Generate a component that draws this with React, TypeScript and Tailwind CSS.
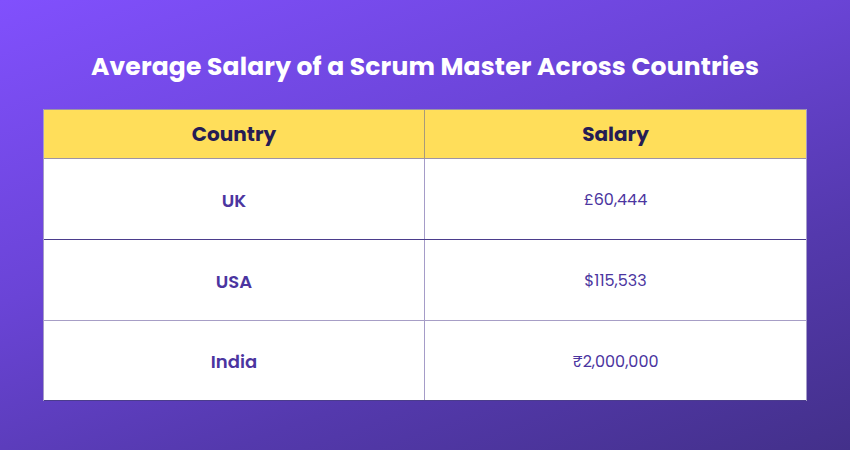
import React from "react";

const rows = [
  { c: "UK", s: "£60,444", cls: "h-[81px] border-[#4b3d8c]" },
  { c: "USA", s: "$115,533", cls: "h-[81px] border-[#a79ec6]" },
  { c: "India", s: "₹2,000,000", cls: "h-[80px] border-[#4b3d8c]" },
];

export default function App() {
  return (
    <div
      className="w-[850px] h-[450px] bg-[linear-gradient(160deg,#8150fd_0%,#6a44d6_40%,#5439ad_70%,#43308a_100%)] flex flex-col overflow-hidden"
      style={{ fontFamily: "Poppins, 'Open Sans', 'Noto Sans', sans-serif" }}
    >
      <h1 className="mt-[49px] h-[36px] flex items-center justify-center text-white text-[25px] font-bold tracking-[0.15px]">
        Average Salary of a Scrum Master Across Countries
      </h1>
      <div className="ml-[43px] mt-[24px] w-[764px] border-l border-r border-[#a59cc8]">
        <div className="grid grid-cols-2 h-[50px] bg-[#ffde5a] border-t border-b border-[#9d93a6]">
          <div className="flex items-center justify-center text-[20px] font-bold text-[#261c54] border-r border-[#a89a7a]">
            Country
          </div>
          <div className="flex items-center justify-center text-[20px] font-bold text-[#261c54]">
            Salary
          </div>
        </div>
        {rows.map((r) => (
          <div key={r.c} className={`grid grid-cols-2 bg-white border-b ${r.cls}`}>
            <div className="flex items-center justify-center pt-[2px] text-[18px] font-semibold text-[#4b35a0] border-r border-[#a59cc8]">
              {r.c}
            </div>
            <div className="flex items-center justify-center pt-[2px] text-[16px] text-[#4b35a0]">
              {r.s}
            </div>
          </div>
        ))}
      </div>
    </div>
  );
}
